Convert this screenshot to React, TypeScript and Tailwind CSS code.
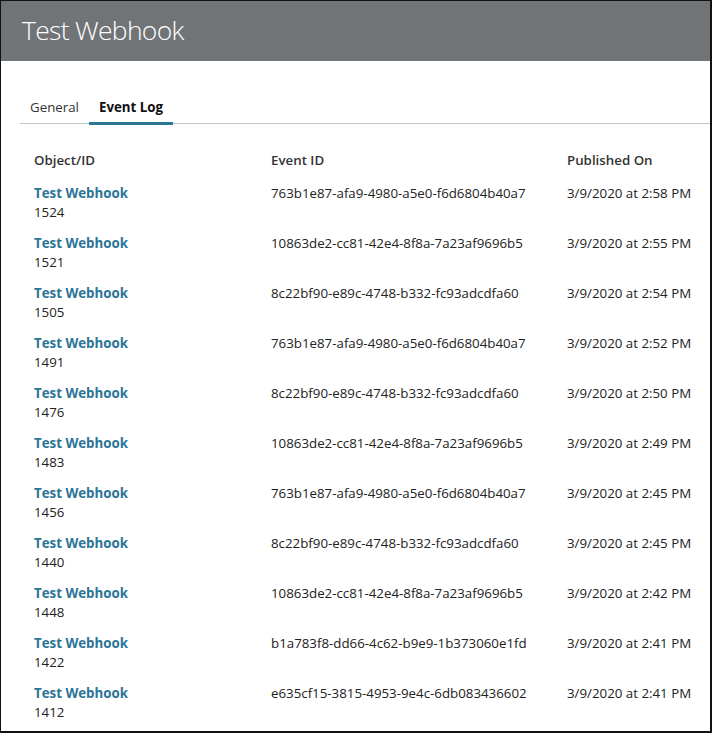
const rows = [
  { id: "1524", event: "763b1e87-afa9-4980-a5e0-f6d6804b40a7", published: "3/9/2020 at 2:58 PM" },
  { id: "1521", event: "10863de2-cc81-42e4-8f8a-7a23af9696b5", published: "3/9/2020 at 2:55 PM" },
  { id: "1505", event: "8c22bf90-e89c-4748-b332-fc93adcdfa60", published: "3/9/2020 at 2:54 PM" },
  { id: "1491", event: "763b1e87-afa9-4980-a5e0-f6d6804b40a7", published: "3/9/2020 at 2:52 PM" },
  { id: "1476", event: "8c22bf90-e89c-4748-b332-fc93adcdfa60", published: "3/9/2020 at 2:50 PM" },
  { id: "1483", event: "10863de2-cc81-42e4-8f8a-7a23af9696b5", published: "3/9/2020 at 2:49 PM" },
  { id: "1456", event: "763b1e87-afa9-4980-a5e0-f6d6804b40a7", published: "3/9/2020 at 2:45 PM" },
  { id: "1440", event: "8c22bf90-e89c-4748-b332-fc93adcdfa60", published: "3/9/2020 at 2:45 PM" },
  { id: "1448", event: "10863de2-cc81-42e4-8f8a-7a23af9696b5", published: "3/9/2020 at 2:42 PM" },
  { id: "1422", event: "b1a783f8-dd66-4c62-b9e9-1b373060e1fd", published: "3/9/2020 at 2:41 PM" },
  { id: "1412", event: "e635cf15-3815-4953-9e4c-6db083436602", published: "3/9/2020 at 2:41 PM" },
];

export default function App() {
  return (
    <div
      className="h-[733px] w-[712px] overflow-hidden border border-r-2 border-b-2 border-[#111] bg-white text-[#222]"
      style={{ fontFamily: '"Segoe UI", "Open Sans", sans-serif' }}
    >
      <header className="flex h-[60px] items-center bg-[#707477] pl-[21px]">
        <h1 className="text-[26.5px] font-light tracking-[-0.7px] text-white">Test Webhook</h1>
      </header>

      <nav className="ml-[19px] mt-[37px] flex border-b border-[#c4c4c4] text-[13.3px]">
        <button type="button" className="px-2.5 pb-[5px] text-[#333]">
          General
        </button>
        <button
          type="button"
          className="-mb-[2px] border-b-[3px] border-[#2a7896] px-2.5 pb-[4px] font-bold text-[#111]"
        >
          Event Log
        </button>
      </nav>

      <div className="pl-[33px] pt-[27px] text-[13.3px]">
        <div className="grid grid-cols-[237px_296px_1fr] pb-[13px] font-semibold text-[#333]">
          <span>Object/ID</span>
          <span>Event ID</span>
          <span>Published On</span>
        </div>
        {rows.map((r) => (
          <div key={r.id} className="grid h-[50px] grid-cols-[237px_296px_1fr] leading-[19px]">
            <div>
              <a href="#" className="font-bold text-[#2a7496]">
                Test Webhook
              </a>
              <div>{r.id}</div>
            </div>
            <span>{r.event}</span>
            <span>{r.published}</span>
          </div>
        ))}
      </div>
    </div>
  );
}
